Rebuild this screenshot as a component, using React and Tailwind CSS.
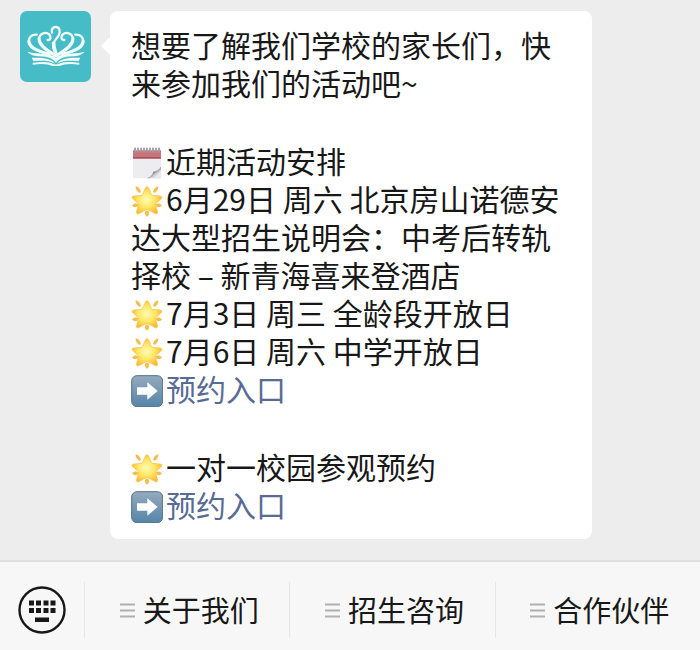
import React from "react";

function SchoolLogo() {
  return (
    <svg viewBox="0 0 213 213" className="size-[71px] shrink-0" role="img" aria-label="学校标志">
      <rect width="213" height="213" rx="21" fill="#45bcc6" />
      <g fill="none" stroke="#f1fcfd" strokeLinecap="round" strokeLinejoin="round">
        <path d="M96 65C93 54 99 48 107 48C118 48 122 59 117 71C112 83 99 90 100 105C101 115 107 121 109 133" strokeWidth="7" />
        <path d="M101 97C100 110 105 119 109 131" strokeWidth="11" />
        <path d="M83 87C91 89 95 78 88 71C78 61 59 66 57 84C55 104 79 118 107 134" strokeWidth="7" />
        <path d="M57 82C57 101 78 115 107 134" strokeWidth="9" />
        <path d="M133 87C125 89 121 78 128 71C138 61 157 66 159 84C161 104 137 118 109 134" strokeWidth="7" />
        <path d="M159 82C159 101 138 115 109 134" strokeWidth="9" />
        <path d="M50 71C35 70 26 79 26 92C26 110 48 121 88 129" strokeWidth="7" />
        <path d="M27 90C28 108 51 120 88 129" strokeWidth="9" />
        <path d="M166 71C181 70 190 79 190 92C190 110 168 121 128 129" strokeWidth="7" />
        <path d="M189 90C188 108 165 120 128 129" strokeWidth="9" />
      </g>
      <g fill="#f1fcfd">
        <path d="M23 122C57 131 88 124 108 140C128 124 159 131 193 122C187 132 172 135 156 136C133 137 121 141 108 155C95 141 83 137 60 136C44 135 29 132 23 122Z" />
        <path d="M35 140C65 140 92 140 106 158C85 147 64 149 40 150Z" />
        <path d="M181 140C151 140 124 140 110 158C131 147 152 149 176 150Z" />
        <path d="M38 155C66 152 88 152 102 160H114C128 152 150 152 178 155V161C150 157 131 159 119 165H97C85 159 66 157 38 161Z" />
      </g>
    </svg>
  );
}

function Calendar() {
  return (
    <svg viewBox="0 0 96 96" className="mr-[3px] inline-block size-8 align-[-6px]" aria-hidden="true">
      <defs>
        <linearGradient id="curl" x1="0" y1="0" x2="1" y2="1">
          <stop offset="0.4" stopColor="#55555a" />
          <stop offset="0.65" stopColor="#d8d8dc" />
        </linearGradient>
      </defs>
      <path d="M6 10H90V62L64 94H6Z" fill="#ededf0" />
      <path d="M6 10H90V34H6Z" fill="#c6737a" />
      <path d="M6 30H90V35H6Z" fill="#a95058" />
      <path d="M46 94C60 89 65 82 67 74C76 74 84 68 90 60V94Z" fill="url(#curl)" />
      <path d="M68 94L90 72V94Z" fill="#e9e9eb" />
      <path d="M12 3V16M21 3V16M30 3V16M39 3V16M48 3V16M57 3V16M66 3V16M75 3V16M84 3V16" stroke="#eee" strokeWidth="5" />
      <path d="M12 2V16M21 2V16M30 2V16M39 2V16M48 2V16M57 2V16M66 2V16M75 2V16M84 2V16" stroke="#5f575b" strokeWidth="3" />
    </svg>
  );
}

function Star() {
  return (
    <svg viewBox="0 0 96 96" className="mr-[3px] inline-block size-8 align-[-6px]" aria-hidden="true">
      <defs>
        <radialGradient id="starFill" cx="0.48" cy="0.48" r="0.52">
          <stop offset="0" stopColor="#fffbb5" />
          <stop offset="0.55" stopColor="#fee765" />
          <stop offset="1" stopColor="#f9bd35" />
        </radialGradient>
      </defs>
      <g fill="#f5bd4b">
        <path d="M14 4C21 5 28 12 30 20L24 24C17 18 13 11 14 4Z" />
        <path d="M82 4C75 5 68 12 66 20L72 24C79 18 83 11 82 4Z" />
        <path d="M3 60C9 55 16 54 21 57L20 64C14 68 7 68 3 60Z" />
        <path d="M93 60C87 55 80 54 75 57L76 64C82 68 89 68 93 60Z" />
        <path d="M48 76C55 79 58 88 48 95C38 88 41 79 48 76Z" />
      </g>
      <path d="M48 5C51 5 54 10 61 28L64 31L87 33C94 34 94 39 89 43L73 57L79 79C81 86 77 89 71 85L48 73L25 85C19 89 15 86 17 79L23 57L7 43C2 39 2 34 9 33L32 31L35 28C42 10 45 5 48 5Z" fill="url(#starFill)" stroke="#f6bd42" strokeWidth="2" />
    </svg>
  );
}

function ArrowBadge() {
  return (
    <svg viewBox="0 0 96 96" className="mr-[3px] inline-block size-8 align-[-6px]" aria-hidden="true">
      <defs>
        <linearGradient id="badge" x1="0" y1="0" x2="0" y2="1">
          <stop offset="0" stopColor="#94aabd" />
          <stop offset="1" stopColor="#5585aa" />
        </linearGradient>
      </defs>
      <rect x="2" y="2" width="93" height="93" rx="16" fill="url(#badge)" stroke="#537088" strokeWidth="3" />
      <path d="M18 37H49V22L80 48L49 74V59H18Z" fill="#fff" />
    </svg>
  );
}

function KeyboardIcon() {
  return (
    <svg viewBox="0 0 48 48" className="size-12" aria-hidden="true">
      <circle cx="24" cy="24" r="22.5" fill="none" stroke="#181818" strokeWidth="2.4" />
      <path d="M11 14.5h5v5h-5zM18 14.5h5v5h-5zM25.500 14.500h5v5h-5zM32.500 14.500h5v5h-5zM11 22h5v5h-5zM18 22h5v5h-5zM25.500 22h5v5h-5zM32.500 22h5v5h-5zM17 31.500h14v4.500h-14z" fill="#181818" />
    </svg>
  );
}

function MenuLines() {
  return (
    <svg viewBox="0 0 15 15" className="size-[15px]" aria-hidden="true">
      <path d="M0 1.500H15M0 7.500H15M0 13.500H15" stroke="#b0b0b0" strokeWidth="2" />
    </svg>
  );
}

function BookingLink() {
  return (
    <p>
      <ArrowBadge />
      <a href="#booking" className="text-[#576b95]">预约入口</a>
    </p>
  );
}

const menus = ["关于我们", "招生咨询", "合作伙伴"];

export default function App() {
  return (
    <div lang="zh-CN" className="flex min-h-screen flex-col bg-[#ededed] font-['Noto_Sans_CJK_SC',sans-serif] text-[#181818]">
      <main className="flex flex-1 items-start px-5 pt-[11px] pb-5">
        <SchoolLogo />
        <div className="mt-[26px] ml-[10px] h-0 w-0 shrink-0 border-y-[9px] border-r-[9px] border-y-transparent border-r-white" />
        <article className="flex max-w-[482px] flex-col gap-10 rounded-lg bg-white px-[21px] pt-[14px] pb-4 text-[30px] leading-[38px]">
          <p>想要了解我们学校的家长们，快来参加我们的活动吧~</p>
          <section>
            <p><Calendar />近期活动安排</p>
            <p><Star />6月29日 周六 北京房山诺德安达大型招生说明会：中考后转轨择校 – 新青海喜来登酒店</p>
            <p><Star />7月3日 周三 全龄段开放日</p>
            <p><Star />7月6日 周六 中学开放日</p>
            <BookingLink />
          </section>
          <section>
            <p><Star />一对一校园参观预约</p>
            <BookingLink />
          </section>
        </article>
      </main>
      <nav className="flex items-center border-t-2 border-[#e0e0e0] bg-[#f7f7f7] pt-5 pb-3">
        <button type="button" aria-label="切换键盘" className="flex w-[84px] shrink-0 justify-center">
          <KeyboardIcon />
        </button>
        {menus.map((label) => (
          <button key={label} type="button" className="flex h-14 flex-1 items-center justify-center gap-2 border-l border-[#e6e6e6] pl-1 text-[29px] whitespace-nowrap">
            <MenuLines />
            {label}
          </button>
        ))}
      </nav>
    </div>
  );
}
